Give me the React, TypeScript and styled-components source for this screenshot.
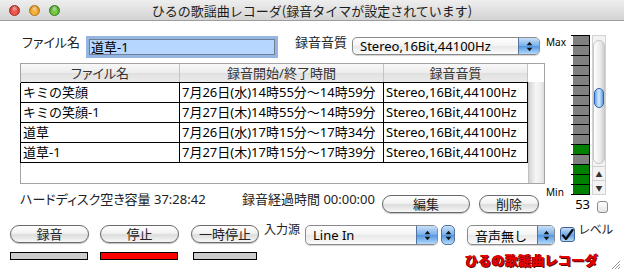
import React from "react";
import styled, { createGlobalStyle } from "styled-components";

const GlobalStyle = createGlobalStyle`
  html, body {
    margin: 0;
    padding: 0;
    background: #fff;
  }
  body {
    font-family: "Noto Sans", "Noto Sans CJK JP", sans-serif;
    font-size: 13px;
    color: #000;
  }
`;

const Window = styled.div`
  position: relative;
  width: 624px;
  height: 272px;
  display: flex;
  flex-direction: column;
  background: #fff;
  overflow: hidden;
`;

const TitleBar = styled.div`
  height: 20px;
  flex: none;
  display: grid;
  grid-template-columns: 1fr auto 1fr;
  align-items: center;
  background: linear-gradient(#eeeeee, #d4d4d4);
  border-bottom: 1px solid #9c9c9c;
`;

const Lights = styled.div`
  display: flex;
  gap: 9px;
  padding-left: 9px;
`;

const Light = styled.span<{ $c: string; $d: string }>`
  width: 11px;
  height: 11px;
  border-radius: 50%;
  box-sizing: border-box;
  border: 1px solid ${(p) => p.$d};
  background: radial-gradient(circle at 50% 25%, #fff8 0, transparent 45%),
    radial-gradient(circle at 50% 70%, ${(p) => p.$c} 30%, ${(p) => p.$d} 100%);
`;

const Title = styled.div`
  font-family: "Noto Sans CJK JP", sans-serif;
  font-size: 13px;
  color: #1c1c1c;
  white-space: nowrap;
`;

const Upper = styled.div`
  display: flex;
  padding: 15px 0 0 20px;
`;

const LeftPane = styled.div`
  width: 525px;
  display: flex;
  flex-direction: column;
`;

const FormRow = styled.div`
  display: flex;
  align-items: flex-start;
  height: 21px;
`;

const Label = styled.span<{ $w?: number; $ml?: number }>`
  ${(p) => (p.$w ? `width: ${p.$w}px; text-align: right;` : "")}
  margin-left: ${(p) => p.$ml ?? 0}px;
  margin-top: -2px;
  line-height: 16px;
  font-size: 13px;
  font-feature-settings: "palt";
  color: #222;
  white-space: nowrap;
`;

const TextField = styled.div`
  margin: 3px 0 0 9px;
  width: 186px;
  height: 16px;
  box-sizing: border-box;
  border: 1px solid #6f7f95;
  box-shadow: 0 0 0 3px #94b6e0;
  background: #b6d5ff;
  padding-left: 1px;
  line-height: 14px;
  font-size: 13px;
`;

const Popup = styled.div<{ $w: number; $h: number; $ml: number; $mt: number }>`
  width: ${(p) => p.$w}px;
  height: ${(p) => p.$h}px;
  margin: ${(p) => p.$mt}px 0 0 ${(p) => p.$ml}px;
  box-sizing: border-box;
  display: flex;
  border: 1px solid #8a8a8a;
  border-radius: 5px;
  overflow: hidden;
  background: linear-gradient(#ffffff, #f3f3f3 50%, #e8e8e8 51%, #fbfbfb);
  box-shadow: 0 1px 1px rgba(0, 0, 0, 0.18);
`;

const PopupText = styled.span`
  flex: 1;
  display: flex;
  align-items: center;
  padding-left: 7px;
  font-size: 13px;
  white-space: nowrap;
`;

const BlueButton = styled.span<{ $w: number }>`
  width: ${(p) => p.$w}px;
  flex: none;
  display: flex;
  align-items: center;
  justify-content: center;
  border-left: 1px solid #52749f;
  background: linear-gradient(#c9e0f8, #79b0ea 48%, #5497e2 52%, #b3d9fb);
`;

const Stepper = styled.span`
  width: 14px;
  height: 20px;
  margin: 3px 0 0 3px;
  box-sizing: border-box;
  display: flex;
  align-items: center;
  justify-content: center;
  border: 1px solid #52749f;
  border-radius: 5px;
  background: linear-gradient(#c9e0f8, #79b0ea 48%, #5497e2 52%, #b3d9fb);
`;

const TableFrame = styled.div`
  margin-top: 6px;
  height: 121px;
  box-sizing: border-box;
  border: 1px solid #a4a4a4;
  display: grid;
  grid-template-columns: 1fr 16px;
  grid-template-rows: 18px 1fr;
`;

const HeaderRow = styled.div`
  display: grid;
  grid-template-columns: 159px 204px 1fr;
`;

const HeaderCell = styled.div`
  text-align: center;
  line-height: 18px;
  font-size: 13px;
  font-feature-settings: "palt";
  color: #333;
  border-right: 1px solid #c4c4c4;
  background: linear-gradient(#f8f8f8, #ececec 50%, #e0e0e0 51%, #ebebeb);
`;

const Rows = styled.div`
  border-top: 1px solid #000;
`;

const Row = styled.div`
  display: grid;
  grid-template-columns: 159px 204px 1fr;
  margin-left: -1px;
  border-left: 1px solid #000;
`;

const Cell = styled.div`
  height: 19px;
  line-height: 19px;
  padding-left: 2px;
  font-size: 13px;
  white-space: nowrap;
  overflow: hidden;
  border-right: 1px solid #000;
  border-bottom: 1px solid #000;
`;

const ScrollTrack = styled.div`
  background: linear-gradient(to right, #d4d4d4, #f6f6f6 45%, #ececec 80%, #dcdcdc);
  border-left: 1px solid #c0c0c0;
`;

const StatusRow = styled.div`
  display: flex;
  align-items: flex-start;
  height: 31px;
`;

const StatusText = styled.span<{ $w: number }>`
  width: ${(p) => p.$w}px;
  padding-top: 7px;
  line-height: 16px;
  font-size: 13px;
  font-feature-settings: "palt";
  color: #222;
  white-space: nowrap;
`;

const AquaButton = styled.button<{ $w: number; $ml: number; $mt: number }>`
  width: ${(p) => p.$w}px;
  height: 18px;
  margin: ${(p) => p.$mt}px 0 0 ${(p) => p.$ml}px;
  padding: 0;
  box-sizing: border-box;
  border: 1px solid #6a6a6a;
  border-radius: 10px;
  background: linear-gradient(#ffffff, #f2f2f2 45%, #dcdcdc 55%, #f7f7f7);
  box-shadow: 0 1px 1px rgba(0, 0, 0, 0.25);
  font-family: "Noto Sans CJK JP", sans-serif;
  font-size: 13px;
  line-height: 16px;
  color: #222;
`;

const MeterPane = styled.div`
  display: flex;
  flex-direction: column;
  margin-top: -1px;
`;

const MeterRow = styled.div`
  display: flex;
  height: 160px;
`;

const Scale = styled.div`
  width: 26px;
  display: flex;
  flex-direction: column;
  justify-content: space-between;
  font-size: 10px;
  line-height: 11px;
  color: #000;
`;

const ScaleLabel = styled.span<{ $pt: number; $mb: number }>`
  padding: ${(p) => p.$pt}px 0 0 1px;
  margin-bottom: ${(p) => p.$mb}px;
`;

const Meter = styled.div`
  width: 19px;
  display: flex;
  flex-direction: column;
  border-bottom: 1px solid #000;
`;

const Segment = styled.div<{ $c: string }>`
  flex: 1;
  border-top: 1px solid #000;
  border-right: 1px solid #000;
  background: linear-gradient(to right, transparent 2px, ${(p) => p.$c} 2px);
`;

const Slider = styled.div`
  position: relative;
  width: 14px;
  margin-left: 2px;
  box-sizing: border-box;
  border: 1px solid #d2d2d2;
  display: flex;
  flex-direction: column;
  background: #f3f3f3;
`;

const SliderTrack = styled.div`
  position: relative;
  flex: 1;
  margin: 4px 0 2px;
  border-radius: 6px;
  border: 1px solid #c6c6c6;
  background: linear-gradient(to right, #ffffff, #ececec 60%, #d0d0d0);
`;

const SliderThumb = styled.div`
  position: absolute;
  left: 0;
  right: 0;
  top: 47px;
  height: 20px;
  box-sizing: border-box;
  border: 1px solid #2f62ad;
  border-radius: 6px;
  background: linear-gradient(to right, #6aa6ec, #d7ecff 50%, #5d9ae4);
`;

const SliderStep = styled.div`
  height: 13px;
  display: flex;
  align-items: center;
  justify-content: center;
  border-top: 1px solid #cfcfcf;
  font-size: 7px;
  color: #333;
`;

const MeterFooter = styled.div`
  display: flex;
  align-items: flex-start;
`;

const LevelValue = styled.span`
  width: 45px;
  text-align: right;
  font-size: 13px;
  line-height: 16px;
  padding-top: 1px;
`;

const SmallBox = styled.span`
  width: 11px;
  height: 12px;
  margin: 6px 0 0 7px;
  box-sizing: border-box;
  border: 1px solid #8a8a8a;
  border-radius: 3px;
  background: linear-gradient(#ffffff, #e4e4e4);
`;

const Bottom = styled.div`
  display: flex;
  flex-direction: column;
  padding-left: 10px;
`;

const ControlRow = styled.div`
  display: flex;
  align-items: flex-start;
  margin-top: 7px;
`;

const InputLabel = styled.span<{ $ml: number }>`
  margin-left: ${(p) => p.$ml}px;
  line-height: 16px;
  font-size: 12px;
  font-feature-settings: "palt";
  color: #222;
  white-space: nowrap;
`;

const CheckBox = styled.span`
  width: 15px;
  height: 15px;
  margin: 5px 0 0 5px;
  box-sizing: border-box;
  display: flex;
  align-items: center;
  justify-content: center;
  border: 1px solid #3c6497;
  border-radius: 3px;
  background: linear-gradient(#c7def7, #74aae8 50%, #5a9be3 52%, #b6dafb);
`;

const IndicatorRow = styled.div`
  display: flex;
  align-items: flex-start;
  margin-top: 7px;
`;

const Indicator = styled.span<{ $w: number; $ml: number; $on?: boolean }>`
  width: ${(p) => p.$w}px;
  height: 8px;
  margin-left: ${(p) => p.$ml}px;
  box-sizing: border-box;
  border: 1px solid #000;
  background: ${(p) => (p.$on ? "#ff0000" : "#cccccc")};
`;

const Brand = styled.span`
  margin: 1px 0 0 208px;
  font-family: "Noto Sans CJK JP", sans-serif;
  font-weight: 900;
  font-size: 13px;
  line-height: 14px;
  color: #e80000;
  letter-spacing: 0.3px;
  text-shadow: 1px 1px 0 #5a0000, -0.5px -0.5px 0 #7a0000;
  white-space: nowrap;
`;

const Grip = styled.svg`
  position: absolute;
  right: 3px;
  bottom: 2px;
`;

const Arrows = () => (
  <svg width="7" height="11" viewBox="0 0 7 11">
    <path d="M3.5 0.8 L6.3 4.2 H0.7 Z" fill="#111" />
    <path d="M3.5 10.2 L6.3 6.8 H0.7 Z" fill="#111" />
  </svg>
);

const rows = [
  ["キミの笑顔", "7月26日(水)14時55分〜14時59分", "Stereo,16Bit,44100Hz"],
  ["キミの笑顔-1", "7月27日(木)14時55分〜14時59分", "Stereo,16Bit,44100Hz"],
  ["道草", "7月26日(水)17時15分〜17時34分", "Stereo,16Bit,44100Hz"],
  ["道草-1", "7月27日(木)17時15分〜17時39分", "Stereo,16Bit,44100Hz"],
];

const GRAY = "#808080";
const GREEN = "#008000";
const segments = [
  ...Array(11).fill(GRAY),
  GREEN,
  GRAY,
  GREEN,
  GREEN,
  GREEN,
];

export default function App() {
  return (
    <>
      <GlobalStyle />
      <Window>
        <TitleBar>
          <Lights>
            <Light $c="#f0564c" $d="#a42820" />
            <Light $c="#f5b23a" $d="#b76f06" />
            <Light $c="#73c844" $d="#2f7d16" />
          </Lights>
          <Title>ひるの歌謡曲レコーダ(録音タイマが設定されています)</Title>
          <span />
        </TitleBar>

        <Upper>
          <LeftPane>
            <FormRow>
              <Label $w={60}>ファイル名</Label>
              <TextField>道草-1</TextField>
              <Label $ml={20}>録音音質</Label>
              <Popup $w={188} $h={18} $ml={5} $mt={1}>
                <PopupText>Stereo,16Bit,44100Hz</PopupText>
                <BlueButton $w={20}>
                  <Arrows />
                </BlueButton>
              </Popup>
            </FormRow>

            <TableFrame>
              <HeaderRow>
                <HeaderCell>ファイル名</HeaderCell>
                <HeaderCell>録音開始/終了時間</HeaderCell>
                <HeaderCell>録音音質</HeaderCell>
              </HeaderRow>
              <span />
              <Rows>
                {rows.map((r) => (
                  <Row key={r[0]}>
                    {r.map((c, i) => (
                      <Cell key={i}>{c}</Cell>
                    ))}
                  </Row>
                ))}
              </Rows>
              <ScrollTrack />
            </TableFrame>

            <StatusRow>
              <StatusText $w={222}>ハードディスク空き容量 37:28:42</StatusText>
              <StatusText $w={140}>録音経過時間 00:00:00</StatusText>
              <AquaButton $w={88} $ml={0} $mt={11}>
                編集
              </AquaButton>
              <AquaButton $w={60} $ml={9} $mt={11}>
                削除
              </AquaButton>
            </StatusRow>
          </LeftPane>

          <MeterPane>
            <MeterRow>
              <Scale>
                <ScaleLabel $pt={2} $mb={0}>
                  Max
                </ScaleLabel>
                <ScaleLabel $pt={0} $mb={-3}>
                  Min
                </ScaleLabel>
              </Scale>
              <Meter>
                {segments.map((c, i) => (
                  <Segment key={i} $c={c} />
                ))}
              </Meter>
              <Slider>
                <SliderTrack>
                  <SliderThumb />
                </SliderTrack>
                <SliderStep>▲</SliderStep>
                <SliderStep>▼</SliderStep>
              </Slider>
            </MeterRow>
            <MeterFooter>
              <LevelValue>53</LevelValue>
              <SmallBox />
            </MeterFooter>
          </MeterPane>
        </Upper>

        <Bottom>
          <ControlRow>
            <AquaButton $w={79} $ml={0} $mt={3}>
              録音
            </AquaButton>
            <AquaButton $w={79} $ml={11} $mt={3}>
              停止
            </AquaButton>
            <AquaButton $w={68} $ml={12} $mt={3}>
              一時停止
            </AquaButton>
            <InputLabel $ml={5}>入力源</InputLabel>
            <Popup $w={133} $h={20} $ml={5} $mt={3}>
              <PopupText>Line In</PopupText>
              <BlueButton $w={20}>
                <Arrows />
              </BlueButton>
            </Popup>
            <Stepper>
              <Arrows />
            </Stepper>
            <Popup $w={88} $h={20} $ml={12} $mt={3}>
              <PopupText>音声無し</PopupText>
              <BlueButton $w={16}>
                <Arrows />
              </BlueButton>
            </Popup>
            <CheckBox>
              <svg width="13" height="12" viewBox="0 0 13 12">
                <path
                  d="M2 6.5 L5 10 L11.5 1"
                  fill="none"
                  stroke="#0a0a0a"
                  strokeWidth="2.2"
                  strokeLinecap="round"
                  strokeLinejoin="round"
                />
              </svg>
            </CheckBox>
            <InputLabel $ml={4}>レベル</InputLabel>
          </ControlRow>
          <IndicatorRow>
            <Indicator $w={78} $ml={0} />
            <Indicator $w={78} $ml={12} $on />
            <Indicator $w={64} $ml={15} />
            <Brand>ひるの歌謡曲レコーダ</Brand>
          </IndicatorRow>
        </Bottom>

        <Grip width="12" height="12" viewBox="0 0 12 12">
          <path d="M11 3 L3 11 M11 6 L6 11 M11 9 L9 11" stroke="#999" strokeWidth="1" />
          <path d="M11.5 4 L4 11.5 M11.5 7 L7 11.5" stroke="#fff" strokeWidth="1" />
        </Grip>
      </Window>
    </>
  );
}
